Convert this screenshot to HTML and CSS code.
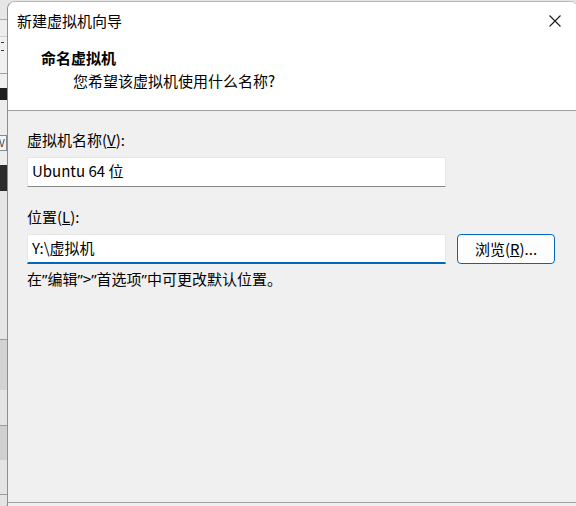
FILE: index.html
```html
<!DOCTYPE html>
<html lang="zh-CN">
<head>
  <meta charset="UTF-8" />
  <meta name="viewport" content="width=device-width, initial-scale=1.0"/>
  <title>新建虚拟机向导</title>
  <link rel="stylesheet" href="styles.css">
</head>
<body>
  <!-- 后面主窗口露出来的一条 -->
  <div class="backdrop">
    <div class="bk bk-top"></div>
    <div class="bk bk-tab"></div>
    <div class="bk bk-tool"><i></i><i></i></div>
    <div class="bk bk-gap"></div>
    <div class="bk bk-dark1"></div>
    <div class="bk bk-gap2"></div>
    <div class="bk bk-check">V</div>
    <div class="bk bk-gap3"></div>
    <div class="bk bk-dark2"></div>
    <div class="bk bk-light"></div>
    <div class="bk bk-row1"></div>
    <div class="bk bk-row2"></div>
    <div class="bk bk-row3"></div>
    <div class="bk bk-row4"></div>
    <div class="bk bk-row5"></div>
  </div>

  <div class="dialog">
    <div class="titlebar">
      <span class="title">新建虚拟机向导</span>
      <button class="close" title="关闭">
        <svg width="12" height="12" viewBox="0 0 12 12"><path d="M0.5 0.5 L11.5 11.5 M11.5 0.5 L0.5 11.5" stroke="#1b1b1b" stroke-width="1.1" fill="none"/></svg>
      </button>
    </div>

    <div class="header">
      <h1>命名虚拟机</h1>
      <p>您希望该虚拟机使用什么名称?</p>
    </div>

    <div class="content">
      <label for="vmName">虚拟机名称(<u>V</u>):</label>
      <input type="text" id="vmName" class="text-input" value="Ubuntu 64 位">

      <label for="vmPath" class="label-2">位置(<u>L</u>):</label>
      <div class="path-row">
        <input type="text" id="vmPath" class="text-input focused" value="Y:\虚拟机">
        <button class="btn">浏览(<u>R</u>)...</button>
      </div>

      <p class="hint">在<span class="q">”</span>编辑<span class="q">”</span>&gt;<span class="q">”</span>首选项<span class="q">”</span>中可更改默认位置。</p>
    </div>

    <div class="footer"></div>
  </div>
</body>
</html>
```

FILE: styles.css
```css
* {margin: 0; padding: 0; box-sizing: border-box;}
body {display: flex; height: 506px; overflow: hidden; background-color: #e6e6e6; font-family: "Noto Sans CJK SC", "Noto Sans", sans-serif; font-size: 15px; color: #000;}

/* 背景窗口 */
.backdrop {width: 7px; flex-shrink: 0; display: flex; flex-direction: column; background-color: #e4e4e4; box-shadow: inset -1px 0 0 #c4c4c4;}
.bk {flex-shrink: 0;}
.bk-top {height: 20px; background-color: #e6e6e6; border-bottom: 1px solid #a8a8a8;}
.bk-tab {height: 17px; background-color: #ededed; border-bottom: 1px solid #cfcfcf;}
.bk-tool {height: 37px; background-color: #f0f0f0; border-bottom: 1px solid #a0a0a0; display: flex; flex-direction: column; gap: 7px; padding-top: 5px;}
.bk-tool i {display: block; width: 3px; height: 1px; margin-left: 1px; background-color: #333;}
.bk-gap {height: 14px; background-color: #f0f0f0;}
.bk-dark1 {height: 12px; background-color: #1e1e1e;}
.bk-gap2 {height: 35px; background-color: #ececec;}
.bk-check {height: 16px; background-color: #f4f4f4; border: 1px solid #8a8a8a; border-left: none; font-size: 10px; line-height: 14px; overflow: hidden; text-indent: -1px; color: #333;}
.bk-gap3 {height: 14px; background-color: #ececec;}
.bk-dark2 {height: 26px; background-color: #2b2b2b;}
.bk-light {height: 149px; background-color: #e6e6e6; border-bottom: 1px solid #9c9c9c;}
.bk-row1 {height: 50px; background-color: #d3d3d3;}
.bk-row2 {height: 36px; background-color: #e4e4e4; border-bottom: 1px solid #9c9c9c;}
.bk-row3 {height: 34px; background-color: #d0d0d0;}
.bk-row4 {height: 35px; background-color: #e4e4e4; border-bottom: 1px solid #9c9c9c;}
.bk-row5 {height: 10px; background-color: #e4e4e4;}

/* 对话框 */
.dialog {flex: 1; margin-top: 1px; margin-right: -2px; display: flex; flex-direction: column; background-color: #f0f0f0; border-left: 1px solid #8e8e8e; border-top: 1px solid #b8b8b8; border-radius: 8px 8px 0 0; overflow: hidden;}
.titlebar {height: 38px; flex-shrink: 0; background-color: #fff; display: flex; align-items: center; justify-content: space-between; padding-left: 9px;}
.title {font-size: 15px; line-height: 20px;}
.close {width: 46px; height: 38px; border: none; background: none; display: flex; align-items: center; justify-content: center;}
.close svg {display: block;}

.header {height: 71px; flex-shrink: 0; background-color: #fff; border-bottom: 1px solid #a0a0a0; padding-top: 8px;}
.header h1 {font-size: 15px; font-weight: 700; line-height: 20px; padding-left: 33px;}
.header p {font-size: 15px; line-height: 20px; margin-top: 3px; padding-left: 65px;}

.content {flex: 1; display: flex; flex-direction: column; align-items: flex-start; padding: 19px 0 0 19px;}
.content label {display: block; line-height: 20px; margin-bottom: 7px;}
.content .label-2 {margin-top: 20px;}
.text-input {width: 419px; height: 30px; font-family: inherit; font-size: 15px; color: #000; background-color: #fff; border: 1px solid #e6e6e6; border-bottom-color: #878787; border-radius: 2px 2px 0 0; padding: 0 4px 4px 4px; outline: none;}
.text-input.focused {border-bottom: 2px solid #0067c0; padding-bottom: 3px;}
.path-row {display: flex; gap: 11px;}
.btn {width: 98px; height: 30px; font-family: inherit; font-size: 15px; color: #000; background-color: #fdfdfd; border: 1px solid #0067c0; border-radius: 4px; padding-bottom: 2px;}
.hint {line-height: 20px; margin-top: 5px;}
.q {font-family: "Noto Sans", sans-serif;}

.footer {height: 4px; flex-shrink: 0; border-top: 1px solid #a0a0a0; background-color: #f0f0f0;}
```
